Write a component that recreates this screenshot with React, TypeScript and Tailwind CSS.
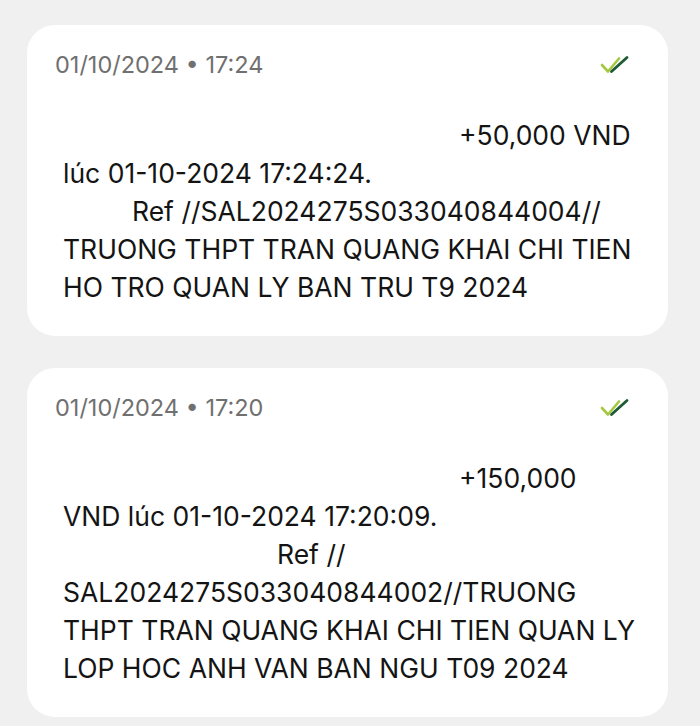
import React from 'react'

interface Line {
  text: string
  indent?: number
}

interface Notice {
  stamp: string
  lines: Line[]
}

const NOTICES: Notice[] = [
  {
    stamp: '01/10/2024 • 17:24',
    lines: [
      { text: '+50,000 VND', indent: 396 },
      { text: 'lúc 01-10-2024 17:24:24.' },
      { text: 'Ref //SAL2024275S033040844004//', indent: 69 },
      { text: 'TRUONG THPT TRAN QUANG KHAI CHI TIEN' },
      { text: 'HO TRO QUAN LY BAN TRU T9 2024' },
    ],
  },
  {
    stamp: '01/10/2024 • 17:20',
    lines: [
      { text: '+150,000', indent: 396 },
      { text: 'VND lúc 01-10-2024 17:20:09.' },
      { text: 'Ref //', indent: 214 },
      { text: 'SAL2024275S033040844002//TRUONG' },
      { text: 'THPT TRAN QUANG KHAI CHI TIEN QUAN LY' },
      { text: 'LOP HOC ANH VAN BAN NGU T09 2024' },
    ],
  },
]

function DoubleCheck() {
  return (
    <svg width="30" height="20" viewBox="0 0 30 20" fill="none" className="mt-[4px]">
      <path d="M2 10 L8 16.5 L19 3.5" stroke="#a6c83f" strokeWidth="2.6" strokeLinecap="round" strokeLinejoin="round" />
      <path d="M11.5 16.5 L27 2.5" stroke="#1e5a36" strokeWidth="2.8" strokeLinecap="round" />
    </svg>
  )
}

function NoticeCard({ notice }: { notice: Notice }) {
  return (
    <div className="w-[641px] rounded-[28px] bg-white pt-[26px] pb-[30px] pl-[28px] pr-[38px]">
      <div className="flex items-start justify-between h-[28px]">
        <span className="text-[23.5px] leading-[28px] text-[#707070]">{notice.stamp}</span>
        <DoubleCheck />
      </div>
      <div className="mt-[37px] pl-[8px]">
        {notice.lines.map((l, i) => (
          <div
            key={i}
            className="text-[26.5px] leading-[38px] text-[#141414] whitespace-nowrap"
            style={l.indent ? { paddingLeft: l.indent } : undefined}
          >
            {l.text}
          </div>
        ))}
      </div>
    </div>
  )
}

export default function App() {
  return (
    <div
      className="min-h-screen w-[700px] bg-[#f0f0f0] pt-[25px] pl-[27px] flex flex-col gap-[32px]"
      style={{ fontFamily: 'Inter, Roboto, sans-serif' }}
    >
      {NOTICES.map((n, i) => (
        <NoticeCard key={i} notice={n} />
      ))}
    </div>
  )
}
